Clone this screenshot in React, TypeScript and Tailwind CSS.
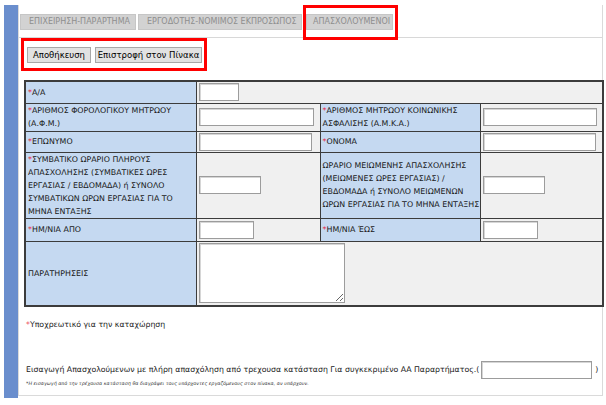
import React from "react";

const font = { fontFamily: '"DejaVu Sans", Verdana, sans-serif' };

const tabs = ["ΕΠΙΧΕΙΡΗΣΗ-ΠΑΡΑΡΤΗΜΑ", "ΕΡΓΟΔΟΤΗΣ-ΝΟΜΙΜΟΣ ΕΚΠΡΟΣΩΠΟΣ", "ΑΠΑΣΧΟΛΟΥΜΕΝΟΙ"];

function Req() {
  return <span className="text-[#e8283c]">*</span>;
}

function Field({ w }: { w: string }) {
  return (
    <input
      type="text"
      className={`block h-[18px] ${w} border border-[#9c9c9c] bg-white shadow-[inset_1px_1px_0_#d6d6d6]`}
    />
  );
}

const label = "border border-[#3c3c3c] bg-[#c5d9f1] pl-[2px] pr-0 align-middle text-[7.9px] leading-[13px] text-[#1a1a1a]";
const cell = "border border-[#3c3c3c] bg-[#f0f0f0] px-[2px] align-middle";

export default function App() {
  return (
    <div className="relative flex h-[405px] w-[606px] bg-white pl-1 pt-[5px]" style={font}>
      <div className="h-[393px] w-[14px] bg-[#6a8ecd]" />
      <div className="h-[391px] w-[585px] border-b border-l border-r border-[#dadada]">
        {/* tab strip */}
        <div className="mt-[9px] flex gap-[2px] border-b border-[#d8d8d8] pb-[7px] pl-[1px]">
          {tabs.map((t, i) => (
            <div
              key={t}
              className={`flex h-[16px] items-center whitespace-nowrap border border-[#c6c6c6] bg-[#d2d2d2] text-[8px] text-[#8e8e8e] ${
                i === 0 ? "w-[116px] pl-[8px]" : i === 1 ? "w-[164px] pl-[8px]" : "ml-[2px] w-[87px] pl-[6px]"
              }`}
            >
              {t}
            </div>
          ))}
        </div>

        {/* actions */}
        <div className="ml-[8px] mt-[9px] flex gap-[4px]">
          <button className="h-[16px] w-[64px] border border-[#a8a8a8] bg-[#e2e2e2] text-[8.5px] text-black">
            Αποθήκευση
          </button>
          <button className="h-[16px] w-[107px] border border-[#a8a8a8] bg-[#e2e2e2] text-[8.5px] text-black">
            Επιστροφή στον Πίνακα
          </button>
        </div>

        <table className="ml-[5px] mt-[17px] w-[578px] table-fixed border-collapse border-2 border-[#3c3c3c]">
          <colgroup>
            <col className="w-[171px]" />
            <col className="w-[124px]" />
            <col className="w-[160px]" />
            <col className="w-[123px]" />
          </colgroup>
          <tbody>
            <tr className="h-[22px]">
              <td className={label}>
                <Req />Α/Α
              </td>
              <td className={cell} colSpan={3}>
                <Field w="w-[40px]" />
              </td>
            </tr>
            <tr className="h-[28px]">
              <td className={label}>
                <Req />ΑΡΙΘΜΟΣ ΦΟΡΟΛΟΓΙΚΟΥ ΜΗΤΡΩΟΥ (Α.Φ.Μ.)
              </td>
              <td className={cell}>
                <Field w="w-[115px]" />
              </td>
              <td className={label}>
                <Req />ΑΡΙΘΜΟΣ ΜΗΤΡΩΟΥ ΚΟΙΝΩΝΙΚΗΣ ΑΣΦΑΛΙΣΗΣ (Α.Μ.Κ.Α.)
              </td>
              <td className={cell}>
                <Field w="w-[114px]" />
              </td>
            </tr>
            <tr className="h-[21px]">
              <td className={label}>
                <Req />ΕΠΩΝΥΜΟ
              </td>
              <td className={cell}>
                <Field w="w-[113px]" />
              </td>
              <td className={label}>
                <Req />ΟΝΟΜΑ
              </td>
              <td className={cell}>
                <Field w="w-[113px]" />
              </td>
            </tr>
            <tr className="h-[65px]">
              <td className={label}>
                <Req />ΣΥΜΒΑΤΙΚΟ ΩΡΑΡΙΟ ΠΛΗΡΟΥΣ ΑΠΑΣΧΟΛΗΣΗΣ (ΣΥΜΒΑΤΙΚΕΣ ΩΡΕΣ ΕΡΓΑΣΙΑΣ / ΕΒΔΟΜΑΔΑ) ή ΣΥΝΟΛΟ
                ΣΥΜΒΑΤΙΚΩΝ ΩΡΩΝ ΕΡΓΑΣΙΑΣ ΓΙΑ ΤΟ ΜΗΝΑ ΕΝΤΑΞΗΣ
              </td>
              <td className={cell}>
                <Field w="w-[62px]" />
              </td>
              <td className={label}>
                ΩΡΑΡΙΟ ΜΕΙΩΜΕΝΗΣ ΑΠΑΣΧΟΛΗΣΗΣ (ΜΕΙΩΜΕΝΕΣ ΩΡΕΣ ΕΡΓΑΣΙΑΣ) / ΕΒΔΟΜΑΔΑ ή ΣΥΝΟΛΟ ΜΕΙΩΜΕΝΩΝ ΩΡΩΝ
                ΕΡΓΑΣΙΑΣ ΓΙΑ ΤΟ ΜΗΝΑ ΕΝΤΑΞΗΣ
              </td>
              <td className={cell}>
                <Field w="w-[62px]" />
              </td>
            </tr>
            <tr className="h-[23px]">
              <td className={label}>
                <Req />ΗΜ/ΝΙΑ ΑΠΟ
              </td>
              <td className={cell}>
                <Field w="w-[55px]" />
              </td>
              <td className={label}>
                <Req />ΗΜ/ΝΙΑ ΈΩΣ
              </td>
              <td className={cell}>
                <Field w="w-[55px]" />
              </td>
            </tr>
            <tr className="h-[65px]">
              <td className={label}>ΠΑΡΑΤΗΡΗΣΕΙΣ</td>
              <td className={cell} colSpan={3}>
                <textarea className="block h-[60px] w-[146px] resize border border-[#9c9c9c] bg-white shadow-[inset_1px_1px_0_#d6d6d6]" />
              </td>
            </tr>
          </tbody>
        </table>

        <p className="ml-[7px] mt-[12px] text-[7.8px] leading-[12px] text-[#222]">
          <Req />Υποχρεωτικό για την καταχώρηση
        </p>

        <div className="ml-[7px] mt-[30px] flex items-center whitespace-nowrap text-[7.8px] text-[#222]">
          <span>
            Εισαγωγή Απασχολούμενων με πλήρη απασχόληση από τρεχουσα κατάσταση Για συγκεκριμένο ΑΑ Παραρτήματος.(
          </span>
          <input
            type="text"
            className="ml-[2px] h-[18px] w-[111px] border border-[#9c9c9c] bg-white shadow-[inset_1px_1px_0_#d6d6d6]"
          />
          <span className="ml-[3px]">)</span>
        </div>
        <p className="ml-[7px] mt-[1px] whitespace-nowrap text-[4.8px] italic text-[#333]">
          *Η εισαγωγή από την τρέχουσα κατάσταση θα διαγράψει τους υπάρχοντες εργαζόμενους στον πίνακα, αν υπάρχουν.
        </p>
      </div>

      {/* highlight frames */}
      <div className="pointer-events-none absolute left-[303px] top-[5px] h-[35px] w-[95px] border-[3px] border-[#f00]" />
      <div className="pointer-events-none absolute left-[21px] top-[38px] h-[33px] w-[186px] border-[3px] border-[#f00]" />
    </div>
  );
}
